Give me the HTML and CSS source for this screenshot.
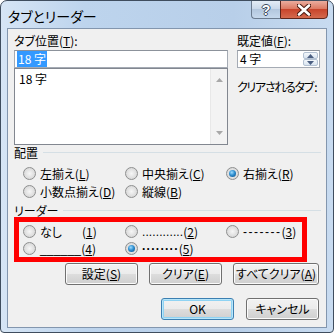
FILE: index.html
```html
<!DOCTYPE html>
<html>
<head>
    <meta charset="UTF-8">
    <title>タブとリーダー</title>
    <link rel="stylesheet" href="styles.css">
</head>
<body>
<div class="window">
    <div class="titlebar">
        <span class="title">タブとリーダー</span>
        <div class="caption-btns">
            <span class="cbtn help">?</span>
            <span class="cbtn close">
                <svg width="14" height="12" viewBox="0 0 14 12">
                    <path d="M2 1.5 L12 10.5 M12 1.5 L2 10.5" stroke="#4a1a10" stroke-width="4.6" stroke-linecap="round"/>
                    <path d="M2 1.5 L12 10.5 M12 1.5 L2 10.5" stroke="#fff" stroke-width="2.6" stroke-linecap="round"/>
                </svg>
            </span>
        </div>
    </div>
    <div class="client">
        <div class="top">
            <div class="col">
                <div class="label">タブ位置(<u>T</u>):</div>
                <div class="textbox"><span class="sel">18 字</span></div>
                <div class="listbox">
                    <div class="items">
                        <div class="item">18 字</div>
                    </div>
                    <div class="vscroll">
                        <svg width="7" height="4" viewBox="0 0 7 4"><polygon points="3.5,0 7,4 0,4" fill="#a8a8a8"/></svg>
                        <svg width="7" height="4" viewBox="0 0 7 4"><polygon points="0,0 7,0 3.5,4" fill="#a8a8a8"/></svg>
                    </div>
                </div>
            </div>
            <div class="col">
                <div class="label">既定値(<u>F</u>):</div>
                <div class="textbox spin">
                    <span>4 字</span>
                    <div class="spin-btns">
                        <span class="spin-btn"><svg width="7" height="4" viewBox="0 0 7 4"><polygon points="3.5,0 7,4 0,4" fill="#4b5f82"/></svg></span>
                        <span class="spin-btn"><svg width="7" height="4" viewBox="0 0 7 4"><polygon points="0,0 7,0 3.5,4" fill="#4b5f82"/></svg></span>
                    </div>
                </div>
                <div class="note">クリアされるタブ :</div>
            </div>
        </div>

        <div class="group-head">配置</div>
        <div class="radios align">
            <div class="opt"><span class="radio"></span>左揃え(<u>L</u>)</div>
            <div class="opt"><span class="radio"></span>中央揃え(<u>C</u>)</div>
            <div class="opt"><span class="radio on"></span>右揃え(<u>R</u>)</div>
            <div class="opt"><span class="radio"></span>小数点揃え(<u>D</u>)</div>
            <div class="opt"><span class="radio"></span>縦線(<u>B</u>)</div>
        </div>

        <div class="group-head leader-head">リーダー</div>
        <div class="mark">
            <div class="radios leader">
                <div class="opt"><span class="radio"></span><span class="none">なし</span><span class="num">(<u>1</u>)</span></div>
                <div class="opt"><span class="radio"></span><span class="fill dots">............</span><span class="num">(<u>2</u>)</span></div>
                <div class="opt"><span class="radio"></span><span class="fill dashes">-------</span><span class="num">(<u>3</u>)</span></div>
                <div class="opt"><span class="radio"></span><span class="fill line">______</span><span class="num">(<u>4</u>)</span></div>
                <div class="opt"><span class="radio on"></span><span class="fill mid">········</span><span class="num">(<u>5</u>)</span></div>
            </div>
        </div>

        <div class="btn-row">
            <span class="btn">設定(<u>S</u>)</span>
            <span class="btn">クリア(<u>E</u>)</span>
            <span class="btn wide">すべてクリア(<u>A</u>)</span>
        </div>
        <div class="btn-row last">
            <span class="btn default">OK</span>
            <span class="btn">キャンセル</span>
        </div>
    </div>
</div>
</body>
</html>
```

FILE: styles.css
```css
* {
    box-sizing: border-box;
}

html, body {
    margin: 0;
    padding: 0;
}

body {
    width: 334px;
    height: 333px;
    background: #fff;
    font-family: "Noto Sans CJK JP", "Liberation Sans", sans-serif;
    font-size: 12px;
    font-feature-settings: "palt";
    color: #000;
}

u {
    text-decoration: underline;
    text-underline-offset: 1px;
}

.window {
    width: 334px;
    height: 333px;
    display: flex;
    flex-direction: column;
    border: 1px solid #3f4d5e;
    border-radius: 7px 7px 4px 4px;
    overflow: hidden;
    background: linear-gradient(to right, #d6e5f5, #bdd4ed 25%, #b8cfe9 70%, #c8dbf0);
}

/* title bar */

.titlebar {
    height: 27px;
    flex: none;
    display: flex;
    justify-content: space-between;
    align-items: flex-start;
    padding-left: 7px;
}

.title {
    margin-top: 7px;
    font-size: 14px;
    line-height: 16px;
}

.caption-btns {
    display: flex;
    margin-top: -1px;
    margin-right: 5px;
}

.cbtn {
    height: 19px;
    display: flex;
    align-items: center;
    justify-content: center;
}

.help {
    width: 29px;
    border: 1px solid #6b7b8f;
    border-right: none;
    border-radius: 0 0 0 4px;
    background: linear-gradient(#e3ecf6, #cad9ea 45%, #b3c7de 50%, #c6d8ec);
    color: #fff;
    font-family: "Liberation Sans", sans-serif;
    font-weight: bold;
    font-size: 14px;
    text-shadow: -1px 0 #3c4b5e, 1px 0 #3c4b5e, 0 -1px #3c4b5e, 0 1px #3c4b5e;
}

.close {
    width: 48px;
    border: 1px solid #5e261c;
    border-radius: 0 0 4px 0;
    background: linear-gradient(#eaac9e, #dc7a63 45%, #c8452c 50%, #d46a4e);
}

/* client area */

.client {
    flex: 1;
    margin: 0 6px 4px;
    padding: 4px 5px 0 6px;
    border: 1px solid #8396ae;
    background: #f0f0f0;
}

.top {
    display: grid;
    grid-template-columns: 214px 83px;
    column-gap: 9px;
}

.label {
    height: 17px;
    line-height: 15px;
}

.textbox {
    height: 18px;
    padding: 0 2px;
    border: 1px solid #a5abb4;
    border-top-color: #8c929b;
    background: #fff;
    line-height: 16px;
}

.sel {
    display: inline-block;
    padding: 0 1px;
    background: #3399ff;
    color: #fff;
}

.listbox {
    height: 77px;
    display: flex;
    border: 1px solid #828790;
    background: #fff;
}

.items {
    flex: 1;
    padding: 2px 4px;
}

.item {
    line-height: 15px;
}

.vscroll {
    width: 17px;
    display: flex;
    flex-direction: column;
    justify-content: space-between;
    align-items: center;
    padding: 9px 0 9px;
    border-left: 1px solid #e8e8e8;
    background: #f3f3f3;
}

.spin {
    display: flex;
    justify-content: space-between;
    padding-right: 1px;
}

.spin-btns {
    width: 15px;
    display: flex;
    flex-direction: column;
    padding: 1px 0;
}

.spin-btn {
    flex: 1;
    display: flex;
    align-items: center;
    justify-content: center;
    border: 1px solid #b3c1d2;
    border-radius: 2px;
    background: linear-gradient(#f3f7fb, #d9e4f0);
}

.note {
    margin-top: 11px;
    line-height: 15px;
    white-space: nowrap;
    letter-spacing: -1.3px;
}

/* groups */

.group-head {
    height: 15px;
    display: flex;
    align-items: center;
    gap: 5px;
    line-height: 15px;
}

.group-head::after {
    content: "";
    flex: 1;
    border-top: 1px solid #d5dfe5;
}

.leader-head {
    height: 14px;
    margin-top: 3px;
}

.radios {
    display: grid;
    grid-template-columns: 102px 101px auto;
}

.align {
    margin-top: 4px;
    padding-left: 9px;
    grid-auto-rows: 18px;
}

.opt {
    display: flex;
    align-items: center;
    white-space: nowrap;
}

.radio {
    width: 13px;
    height: 13px;
    flex: none;
    margin-right: 4px;
    border: 1px solid #8e8f8f;
    border-radius: 50%;
    background: radial-gradient(circle at 50% 50%, #f6f6f6 0, #e4e4e4 45%, #cfcfcf 100%);
    display: flex;
    align-items: center;
    justify-content: center;
}

.radio.on::after {
    content: "";
    width: 7px;
    height: 7px;
    border-radius: 50%;
    background: radial-gradient(circle at 40% 35%, #9fdcff 0, #2f8fd0 45%, #0c4a80 100%);
}

/* annotation box */

.mark {
    width: 293px;
    height: 45px;
    border: 5px solid #ff0000;
}

.leader {
    padding: 1px 0 0 4px;
    grid-auto-rows: 17px;
}

.none {
    margin-right: 20px;
}

.fill {
    font-family: "Liberation Sans", sans-serif;
}

.dots {
    letter-spacing: 0.1px;
}

.dashes {
    letter-spacing: 1.5px;
}

.line {
    letter-spacing: 0.2px;
}

.mid {
    letter-spacing: 0.6px;
    font-weight: bold;
}

.num {
    font-family: "Noto Sans CJK JP", sans-serif;
}

/* buttons */

.btn-row {
    display: flex;
    justify-content: flex-end;
    gap: 11px;
    margin-top: 1px;
    padding-right: 2px;
}

.btn-row.last {
    margin-top: 13px;
    gap: 12px;
}

.btn {
    width: 73px;
    height: 22px;
    display: flex;
    align-items: center;
    justify-content: center;
    border: 1px solid #707070;
    border-radius: 3px;
    background: linear-gradient(#f2f2f2, #ebebeb 50%, #dddddd 50%, #cfcfcf);
    box-shadow: inset 0 0 0 1px #fbfbfb;
    line-height: 14px;
    white-space: nowrap;
}

.btn.wide {
    width: 86px;
}

.btn.default {
    border-color: #3c7fb1;
    box-shadow: inset 0 0 0 1px #b8e6fa, inset 0 0 0 2px #8fd3f3;
}
```
